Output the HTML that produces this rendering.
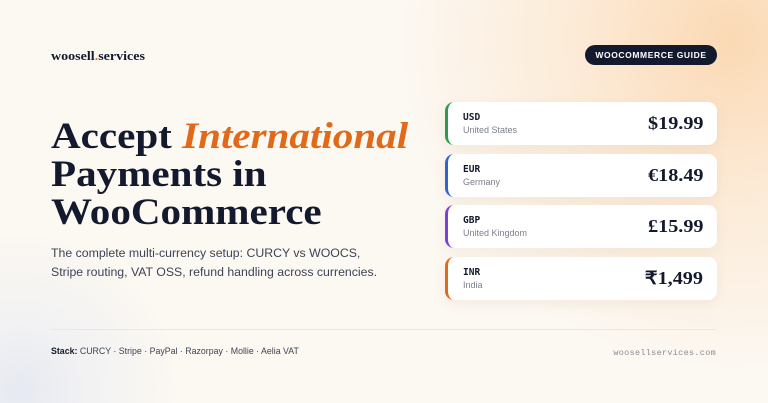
<!DOCTYPE html>
<html><head><style>
*{margin:0;padding:0;box-sizing:border-box}
body{width:768px;height:403px;overflow:hidden;position:relative;font-family:"Liberation Sans",sans-serif;
background:radial-gradient(circle at 730px 40px,#fbd9b4 0,rgba(252,225,195,.6) 150px,rgba(253,245,235,0) 330px),
radial-gradient(circle at 20px 390px,#e6e9f2 0,rgba(236,238,244,.6) 70px,rgba(253,248,240,0) 160px),#fcf8f2;}
.logo{position:absolute;left:51px;top:48px;font-family:"Liberation Serif",serif;font-weight:bold;font-size:13px;color:#141a2e;transform:scaleX(1.08);transform-origin:left}
.logo span{color:#e0691a}
.badge{position:absolute;left:585px;top:45px;width:132px;height:20px;border-radius:10px;background:#141a2e;color:#fff;font-size:8.5px;font-weight:bold;letter-spacing:.6px;text-align:center;line-height:20px}
h1{position:absolute;left:51px;top:118px;font-family:"Liberation Serif",serif;font-weight:bold;font-size:37px;line-height:38px;color:#141a2e;transform:scaleX(1.11);transform-origin:left;white-space:nowrap}
h1 i{color:#e0691a}
.sub{position:absolute;left:51px;top:244px;font-size:12.3px;line-height:19px;color:#3e4456}
.line{position:absolute;left:51px;right:52px;top:329px;height:1px;background:#eee6da}
.stack{position:absolute;left:51px;top:346px;font-size:8.8px;color:#3e4456}
.stack b{color:#141a2e}
.url{position:absolute;right:52px;top:348px;font-family:"Liberation Mono",monospace;font-size:8.5px;color:#8a8d96;letter-spacing:.3px}
.card{position:absolute;left:445px;width:272px;height:43px;background:#fff;border-radius:9px;border-left:3px solid;box-shadow:0 4px 12px rgba(180,150,110,.12)}
.card .c{position:absolute;left:15px;top:10px;font-family:"DejaVu Sans Mono",monospace;font-weight:bold;font-size:9.5px;color:#141a2e}
.card .n{position:absolute;left:15px;top:23px;font-size:9px;color:#7b7f8c}
.card .p{position:absolute;right:14px;top:11px;font-family:"Liberation Serif",serif;font-weight:bold;font-size:18px;color:#141a2e;transform:scaleX(1.12);transform-origin:right}
</style></head><body>
<div class="logo">woosell<span>.</span>services</div>
<div class="badge">WOOCOMMERCE GUIDE</div>
<h1>Accept <i>International</i><br>Payments in<br>WooCommerce</h1>
<div class="sub">The complete multi-currency setup: CURCY vs WOOCS,<br>Stripe routing, VAT OSS, refund handling across currencies.</div>
<div class="card" style="top:102px;border-color:#2a9d4a"><div class="c">USD</div><div class="n">United States</div><div class="p">$19.99</div></div>
<div class="card" style="top:154px;border-color:#2f62d8"><div class="c">EUR</div><div class="n">Germany</div><div class="p">€18.49</div></div>
<div class="card" style="top:205px;border-color:#7b3fe0"><div class="c">GBP</div><div class="n">United Kingdom</div><div class="p">£15.99</div></div>
<div class="card" style="top:257px;border-color:#e0691a"><div class="c">INR</div><div class="n">India</div><div class="p">₹1,499</div></div>
<div class="line"></div>
<div class="stack"><b>Stack:</b> CURCY · Stripe · PayPal · Razorpay · Mollie · Aelia VAT</div>
<div class="url">woosellservices.com</div>
</body></html>
